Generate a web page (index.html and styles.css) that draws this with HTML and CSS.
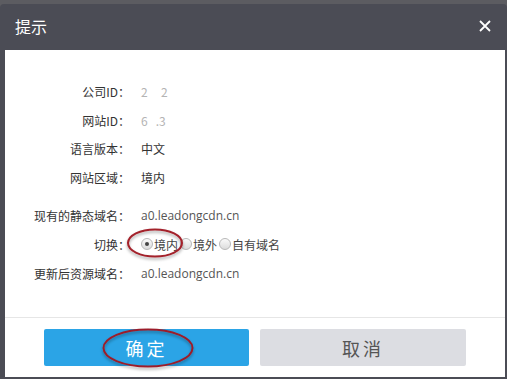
FILE: index.html
```html
<!DOCTYPE html>
<html lang="zh-CN">
<head>
<meta charset="utf-8">
<link rel="stylesheet" href="styles.css">
</head>
<body>
<div class="dialog">
  <div class="header">
    <span class="title">提示</span>
    <svg class="close" width="12" height="12" viewBox="0 0 12 12"><path d="M1 1L11 11M11 1L1 11" stroke="#fff" stroke-width="1.8"/></svg>
  </div>
  <div class="content">
    <div class="form">
      <div class="group g1">
        <div class="label">公司ID：</div><div class="value faint">2&nbsp;&nbsp;&nbsp;&nbsp;&nbsp;2</div>
        <div class="label">网站ID：</div><div class="value faint">6&nbsp;&nbsp;&nbsp;.3</div>
        <div class="label">语言版本：</div><div class="value">中文</div>
        <div class="label">网站区域：</div><div class="value">境内</div>
      </div>
      <div class="group g2">
        <div class="label">现有的静态域名：</div><div class="value domain">a0.leadongcdn.cn</div>
        <div class="label">切换：</div>
        <div class="value radios">
          <span class="radio checked"></span><span class="rlabel">境内</span>
          <span class="radio"></span><span class="rlabel">境外</span>
          <span class="radio"></span><span class="rlabel">自有域名</span>
        </div>
        <div class="label">更新后资源域名：</div><div class="value domain">a0.leadongcdn.cn</div>
      </div>
    </div>
    <div class="footer">
      <button class="btn ok">确定</button>
      <button class="btn cancel">取消</button>
    </div>
  </div>
</div>
<svg class="marks" width="507" height="379" viewBox="0 0 507 379">
  <defs>
    <filter id="sh" x="-20%" y="-20%" width="140%" height="160%">
      <feDropShadow dx="0" dy="2" stdDeviation="1.5" flood-color="#000" flood-opacity="0.35"/>
    </filter>
  </defs>
  <ellipse cx="155" cy="243" rx="27" ry="13.5" fill="none" stroke="#a3202b" stroke-width="2" filter="url(#sh)"/>
  <ellipse cx="148" cy="348" rx="44.5" ry="18.5" fill="none" stroke="#9c1f2a" stroke-width="2" filter="url(#sh)"/>
</svg>
</body>
</html>
```
FILE: styles.css
```css
html, body {
  margin: 0;
  padding: 0;
}
body {
  width: 507px;
  height: 379px;
  background: #5c5c61;
  font-family: "Noto Sans CJK SC", "Microsoft YaHei", sans-serif;
  position: relative;
  overflow: hidden;
}
.dialog {
  margin-top: 4px;
  height: 375px;
  background: #4b4c55;
  border-radius: 4px 4px 0 0;
  display: flex;
  flex-direction: column;
  padding: 0 2px 2px 5px;
  box-sizing: border-box;
}
.header {
  height: 44px;
  display: flex;
  align-items: center;
  justify-content: space-between;
  padding: 0 14px 2px 10px;
  flex: none;
}
.title {
  color: #fff;
  font-size: 16px;
  line-height: 20px;
}
.close {
  display: block;
  margin-top: -1px;
}
.content {
  flex: 1;
  background: #fff;
  display: flex;
  flex-direction: column;
}
.form {
  flex: 1;
  padding-top: 27.5px;
}
.group {
  display: grid;
  grid-template-columns: 125px 1fr;
  column-gap: 11px;
  font-size: 12px;
  color: #333;
}
.g1 { grid-auto-rows: 28.5px; }
.g2 { grid-auto-rows: 29px; margin-top: 9px; }
.label {
  text-align: right;
  display: flex;
  align-items: center;
  justify-content: flex-end;
}
.value {
  display: flex;
  align-items: center;
}
.faint { color: #b4b4b4; }
.domain {
  color: #555;
  font-size: 12px;
  font-family: "Open Sans", "Noto Sans CJK SC", sans-serif;
}
.radio {
  width: 10px;
  height: 10px;
  border-radius: 50%;
  border: 1px solid #b8b8b8;
  background: linear-gradient(#fafafa, #dcdcdc);
  display: inline-block;
  position: relative;
  margin-right: 1px;
}
.radio.checked::after {
  content: "";
  position: absolute;
  left: 3px;
  top: 3px;
  width: 4px;
  height: 4px;
  border-radius: 50%;
  background: #444;
}
.rlabel {
  margin-right: 2px;
  color: #444;
}
.footer {
  height: 60px;
  border-top: 1px solid #e6e6e6;
  display: flex;
  gap: 11px;
  padding: 11px 0 0 39px;
  box-sizing: border-box;
}
.btn {
  height: 37px;
  border: none;
  border-radius: 2px;
  font-family: "Noto Sans CJK SC", sans-serif;
  font-size: 18px;
  letter-spacing: 3px;
  padding: 0;
}
.ok {
  width: 205px;
  background: #2ba4e6;
  color: #fff;
}
.cancel {
  width: 206px;
  background: #dcdde2;
  color: #555;
}
.marks {
  position: absolute;
  left: 0;
  top: 0;
  pointer-events: none;
}
```
